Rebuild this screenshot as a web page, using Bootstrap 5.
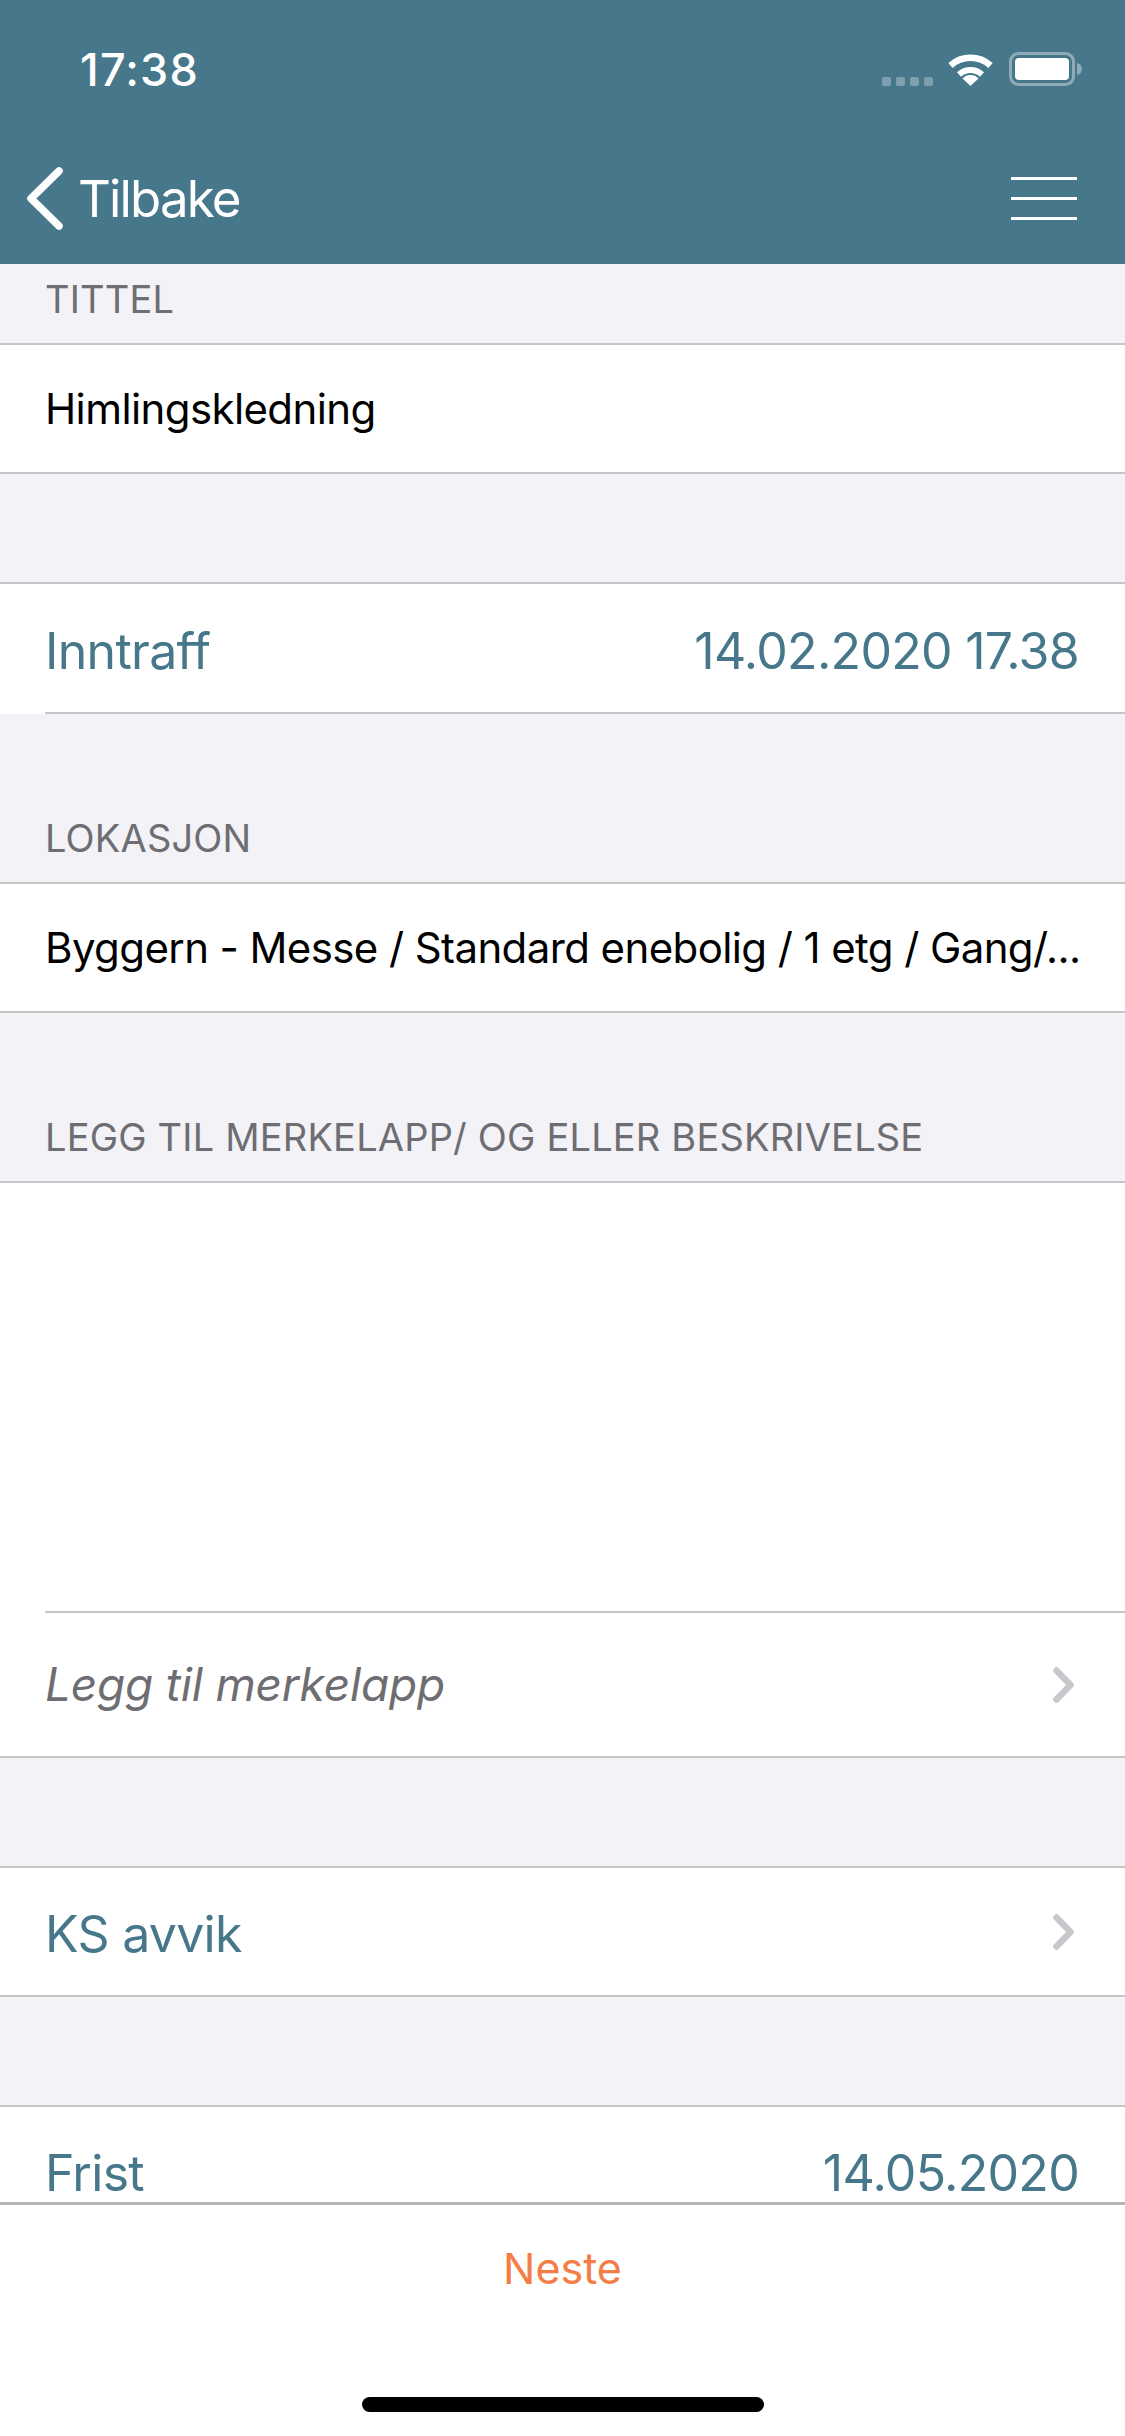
<!DOCTYPE html>
<html lang="no">
<head>
  <meta charset="UTF-8" />
  <meta name="viewport" content="width=device-width, initial-scale=1.0"/>
  <title>Avvik</title>
  <link href="https://cdn.jsdelivr.net/npm/bootstrap@5.3.0/dist/css/bootstrap.min.css" rel="stylesheet"/>
  <style>
    body {
      background-color: #f2f2f7;
      font-family: Inter, "Liberation Sans", sans-serif;
    }
    .skjerm { width: 1125px; height: 2436px; }
    .topp { height: 264px; background-color: #47778a; color: #fff; }
    .status-rad { height: 132px; padding: 6px 43px 0 80px; }
    .klokke { font-size: 45px; font-weight: 500; line-height: 1; letter-spacing: 1.2px; }
    .prikker { gap: 5px; padding-top: 24px; margin-right: 15px; }
    .prikker span { width: 9px; height: 9px; border-radius: 2px; background-color: #7ea0ae; }
    .nav-rad { height: 132px; padding: 0 48px 0 27px; }
    .tilbake { font-size: 51px; line-height: 1; letter-spacing: -1.85px; gap: 15px; color: #fff; text-decoration: none; }
    .meny { width: 66px; gap: 17px; background: none; border: 0; padding: 0; }
    .meny span { height: 3px; background-color: #fff; }
    .innhold { min-height: 0; }
    .seksjon { font-size: 38px; line-height: 1; color: #6d6d72; padding: 0 45px 25px; display: flex; align-items: flex-end; letter-spacing: .18px; white-space: nowrap; }
    .h-79 { height: 79px; }
    .h-168 { height: 168px; }
    .h-108 { height: 108px; }
    .rute { height: 131px; padding: 0 46px 0 45px; background-color: #fff; border-top: 2px solid #c6c6c8; border-bottom: 2px solid #c6c6c8; font-size: 42px; letter-spacing: -.6px; color: #000; white-space: nowrap; overflow: hidden; }
    .rute.inset { height: 132px; border-bottom: 0; padding: 0; }
    .rute-innhold { height: 100%; margin-left: 45px; padding-right: 46px; border-bottom: 2px solid #c6c6c8; }
    .rute-merkelapp { height: 145px; border-top: 0; }
    .stor { font-size: 50px; color: #47778a; letter-spacing: -.7px; }
    .stor span { padding-top: 6px; }
    .fyll { height: 432px; background-color: #fff; border-top: 2px solid #c6c6c8; }
    .fyll-innhold { height: 100%; margin-left: 45px; border-bottom: 2px solid #c6c6c8; }
    .hint { font-size: 46px; font-style: italic; letter-spacing: -.2px; color: #6d6d72; }
    .pil { margin-right: 5px; }
    .bunn { height: 234px; background-color: #fff; border-top: 3px solid #b5b5b5; }
    .neste { height: 126px; width: 100%; font-size: 43px; color: #f47c45; background: none; border: 0; }
    .hjem { width: 402px; height: 15px; margin-top: 66px; border-radius: 8px; background-color: #000; }
  </style>
</head>
<body>

<div class="skjerm d-flex flex-column overflow-hidden">

  <!-- Toppfelt -->
  <header class="topp flex-shrink-0">
    <div class="status-rad d-flex justify-content-between align-items-center">
      <div class="klokke">17:38</div>
      <div class="d-flex align-items-center">
        <div class="prikker d-flex"><span></span><span></span><span></span><span></span></div>
        <svg width="45" height="33" viewBox="0 0 45 33" class="me-3" fill="none" stroke="#fff">
          <path d="M2.5 12.5A30 30 0 0 1 42.5 12.5" stroke-width="6.5"/>
          <path d="M11 21.5A17 17 0 0 1 34 21.5" stroke-width="6"/>
          <path d="M22.5 33L14.5 25.5A11 11 0 0 1 30.5 25.5Z" fill="#fff" stroke="none"/>
        </svg>
        <svg width="73" height="34" viewBox="0 0 73 34">
          <rect x="1.5" y="1.5" width="63" height="31" rx="8" fill="none" stroke="#8eabb7" stroke-width="3"/>
          <rect x="6" y="6" width="54" height="22" rx="4" fill="#fff"/>
          <path d="M68 11c3 .6 5 3 5 6s-2 5.400-5 6z" fill="#8eabb7"/>
        </svg>
      </div>
    </div>
    <div class="nav-rad d-flex justify-content-between align-items-center">
      <a class="tilbake d-flex align-items-center" href="#">
        <svg width="36" height="63" viewBox="0 0 36 63" fill="none" stroke="#fff" stroke-width="7.500" stroke-linecap="round" stroke-linejoin="round">
          <path d="M32 4L4 31.500L32 59"/>
        </svg>
        <span>Tilbake</span>
      </a>
      <button class="meny d-flex flex-column" type="button" aria-label="Meny"><span class="w-100"></span><span class="w-100"></span><span class="w-100"></span></button>
    </div>
  </header>

  <!-- Skjema -->
  <main class="innhold flex-grow-1 overflow-hidden">
    <div class="seksjon h-79">TITTEL</div>
    <div class="rute d-flex align-items-center">Himlingskledning</div>
    <div class="h-108"></div>
    <div class="rute inset">
      <div class="rute-innhold stor d-flex align-items-center justify-content-between">
        <span>Inntraff</span><span>14.02.2020 17.38</span>
      </div>
    </div>
    <div class="seksjon h-168">LOKASJON</div>
    <div class="rute d-flex align-items-center">Byggern - Messe / Standard enebolig / 1 etg / Gang/...</div>
    <div class="seksjon h-168">LEGG TIL MERKELAPP/ OG ELLER BESKRIVELSE</div>
    <div class="fyll"><div class="fyll-innhold"></div></div>
    <div class="rute rute-merkelapp d-flex align-items-center justify-content-between">
      <span class="hint">Legg til merkelapp</span>
      <svg class="pil" width="21" height="36" viewBox="0 0 21 36" fill="none" stroke="#c7c7cc" stroke-width="6.500" stroke-linecap="round" stroke-linejoin="round"><path d="M3.500 3.500L17.500 18L3.500 32.500"/></svg>
    </div>
    <div class="h-108"></div>
    <div class="rute stor d-flex align-items-center justify-content-between">
      <span>KS avvik</span>
      <svg class="pil" width="21" height="36" viewBox="0 0 21 36" fill="none" stroke="#c7c7cc" stroke-width="6.500" stroke-linecap="round" stroke-linejoin="round"><path d="M3.500 3.500L17.500 18L3.500 32.500"/></svg>
    </div>
    <div class="h-108"></div>
    <div class="rute stor d-flex align-items-center justify-content-between">
      <span>Frist</span><span>14.05.2020</span>
    </div>
  </main>

  <!-- Bunn -->
  <footer class="bunn flex-shrink-0 d-flex flex-column align-items-center">
    <button class="neste" type="button">Neste</button>
    <div class="hjem"></div>
  </footer>
</div>

<script src="https://cdn.jsdelivr.net/npm/bootstrap@5.3.0/dist/js/bootstrap.bundle.min.js"></script>
</body>
</html>
